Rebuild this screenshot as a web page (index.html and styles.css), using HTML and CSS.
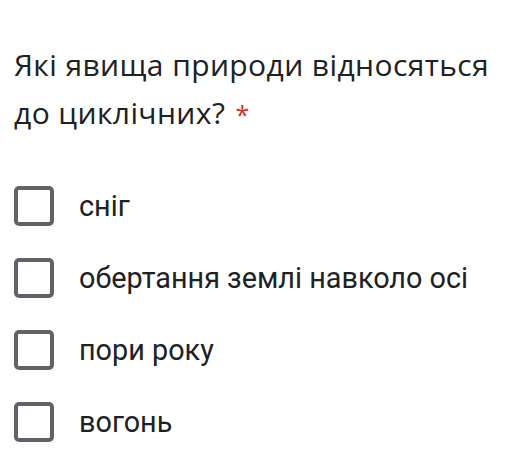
FILE: index.html
```html
<!DOCTYPE html>
<html lang="uk">
<head>
<meta charset="utf-8">
<link rel="stylesheet" href="styles.css">
</head>
<body>
<div class="card">
  <div class="title">Які явища природи відносяться до циклічних? <span class="req">*</span></div>
  <div class="options">
    <label class="opt"><span class="box"></span><span class="label">сніг</span></label>
    <label class="opt"><span class="box"></span><span class="label">обертання землі навколо осі</span></label>
    <label class="opt"><span class="box"></span><span class="label">пори року</span></label>
    <label class="opt"><span class="box"></span><span class="label">вогонь</span></label>
  </div>
</div>
</body>
</html>
```
FILE: styles.css
```css
html, body { margin: 0; padding: 0; background: #fff; }
body { width: 505px; height: 465px; overflow: hidden; }
.card { padding: 41px 0 0 14px; }
.title {
  font-family: "Open Sans", "Noto Sans", sans-serif;
  font-size: 30px;
  line-height: 48px;
  color: #202124;
  width: 490px;
  letter-spacing: 0.4px;
}
.req { color: #d93025; font-size: 25px; margin-left: 2px; }
.options { margin-top: 48px; display: flex; flex-direction: column; gap: 32px; }
.opt { display: flex; align-items: center; height: 40px; }
.box {
  box-sizing: border-box;
  width: 40px; height: 40px;
  border: 4px solid #5f6368;
  border-radius: 5px;
  flex: none;
}
.label {
  margin-left: 25px;
  font-family: Roboto, "Liberation Sans", sans-serif;
  font-size: 28.8px;
  color: #202124;
}
```
